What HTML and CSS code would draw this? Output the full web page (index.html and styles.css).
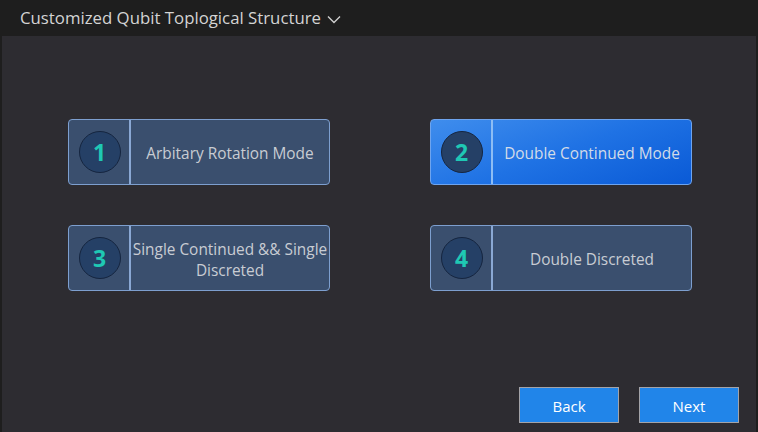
FILE: index.html
```html
<!DOCTYPE html>
<html>
<head>
<meta charset="utf-8">
<link rel="stylesheet" href="styles.css">
</head>
<body>
<header class="topbar">
  <span class="title">Customized Qubit Toplogical Structure</span>
  <svg class="chevron" width="14" height="9" viewBox="0 0 14 9"><path d="M1 1.5 L7 7.5 L13 1.5" fill="none" stroke="#cfcfcf" stroke-width="1.4"/></svg>
</header>
<main class="panel">
  <div class="grid">
    <div class="card">
      <div class="num-col"><div class="circle">1</div></div>
      <div class="label">Arbitary Rotation Mode</div>
    </div>
    <div class="card selected">
      <div class="num-col"><div class="circle">2</div></div>
      <div class="label">Double Continued Mode</div>
    </div>
    <div class="card">
      <div class="num-col"><div class="circle">3</div></div>
      <div class="label">Single Continued &amp;&amp; Single Discreted</div>
    </div>
    <div class="card">
      <div class="num-col"><div class="circle">4</div></div>
      <div class="label">Double Discreted</div>
    </div>
  </div>
  <div class="actions">
    <button class="btn">Back</button>
    <button class="btn">Next</button>
  </div>
</main>
</body>
</html>
```
FILE: styles.css
```css
html, body {
  margin: 0;
  padding: 0;
  background: #1e1e1e;
  font-family: "Open Sans", "Noto Sans", sans-serif;
  width: 758px;
  height: 432px;
  overflow: hidden;
}
.topbar {
  height: 36px;
  display: flex;
  align-items: center;
  padding-left: 20px;
  box-sizing: border-box;
  gap: 6px;
}
.title {
  color: #d4d4d4;
  font-size: 16.8px;
  line-height: 22px;
  margin-top: -1px;
}
.chevron { margin-top: 2px; }
.panel {
  margin: 0 2px;
  height: 396px;
  background: #2d2c31;
  box-sizing: border-box;
  padding: 83px 17px 0 66px;
  display: flex;
  flex-direction: column;
}
.grid {
  display: grid;
  grid-template-columns: 262px 262px;
  grid-auto-rows: 66px;
  column-gap: 100px;
  row-gap: 40px;
}
.card {
  display: flex;
  box-sizing: border-box;
  border: 1px solid #7d9fcf;
  border-radius: 4px;
  background: #3a4f6e;
}
.card.selected {
  background: linear-gradient(160deg, #3f8ded 0%, #1f72e4 50%, #0a5ad6 100%);
  border-color: #6ea4ee;
}
.num-col {
  width: 60px;
  border-right: 2px solid #8aa8d4;
  display: flex;
  align-items: center;
  justify-content: center;
}
.card.selected .num-col { border-right-color: #8dbdf4; }
.circle {
  width: 40px;
  height: 40px;
  border-radius: 50%;
  background: #254066;
  border: 1px solid #15253f;
  color: #1fc8b4;
  font-weight: bold;
  font-size: 23px;
  display: flex;
  align-items: center;
  justify-content: center;
  margin-left: 1px;
}
.label {
  flex: 1;
  display: flex;
  align-items: center;
  justify-content: center;
  text-align: center;
  color: #c8ccd3;
  font-size: 15.4px;
  line-height: 21px;
  padding-top: 3px;
}
.card.selected .label { color: #d2dbe8; }
.actions {
  margin-top: auto;
  margin-bottom: 9px;
  display: flex;
  justify-content: flex-end;
  gap: 20px;
}
.btn {
  width: 100px;
  height: 36px;
  background: #2185e9;
  border: 1px solid #a3a3a8;
  color: #ffffff;
  font-family: "Open Sans", "Noto Sans", sans-serif;
  font-size: 15px;
  padding: 2px 0 0 0;
}
```
